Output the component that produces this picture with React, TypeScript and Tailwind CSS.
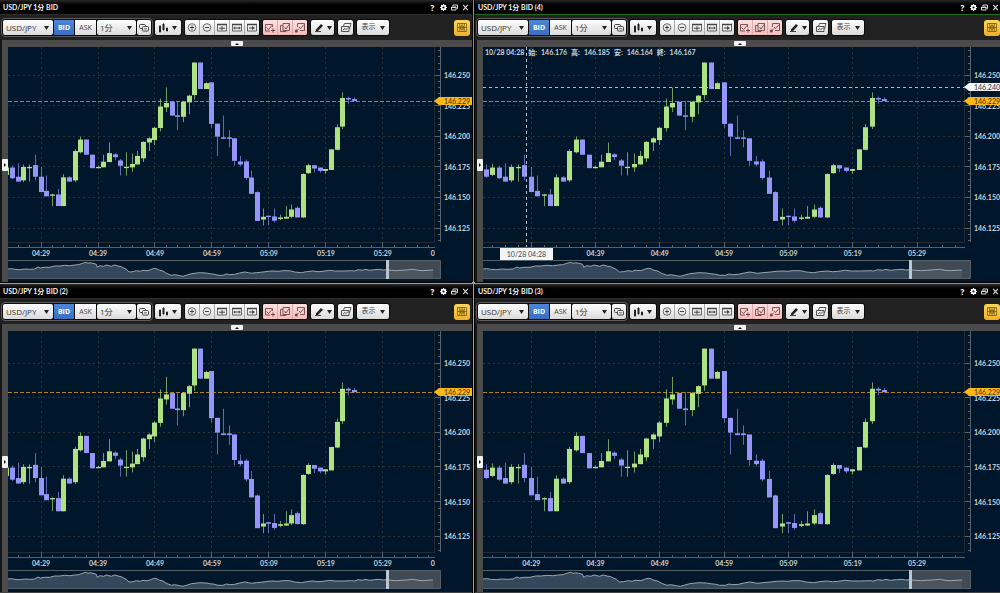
import { useLayoutEffect, useRef, useState } from 'react';
import type { ReactNode } from 'react';

const UP = '#aee283';
const DOWN = '#9696fa';
const PRICE_MAX = 273.1;
const PRICE_SPAN = 159.5;
const MINUTES = 74.95;
const AXIS_W = 37;
const AXIS_H = 40;

// minute offset from 04:29, direction, body top, body bottom, high, low (thousandths above 146)
type Candle = [number, 1 | 0, number, number, number, number];
const candles: Candle[] = [
  [-7, 0, 173, 167, 177, 166],
  [-6, 1, 174.5, 168.5, 177.5, 167.5],
  [-5, 0, 174.5, 165.8, 176, 165],
  [-4, 0, 167, 163, 178, 163],
  [-3, 1, 175, 164, 177, 162.5],
  [-2, 1, 175, 174, 177, 163],
  [-1, 0, 176.5, 167, 185, 164],
  [0, 0, 167, 154.5, 175, 154.5],
  [1, 0, 155.4, 151, 168, 151],
  [2, 1, 152.5, 151.8, 153, 143],
  [3, 0, 152.5, 143, 157, 143],
  [4, 1, 166.5, 143, 169, 143],
  [5, 0, 166.5, 163, 167.5, 163],
  [6, 1, 188, 164, 189.5, 162.5],
  [7, 1, 197.4, 187, 200, 186],
  [8, 0, 197.4, 185, 197.4, 185],
  [9, 0, 185, 174, 185, 174],
  [10, 1, 175, 174.4, 176, 174],
  [11, 1, 179.3, 174.7, 185, 174.7],
  [12, 1, 186.3, 179, 195, 179],
  [13, 0, 185.3, 183, 186.3, 180.5],
  [14, 0, 180.3, 176, 181.5, 168],
  [15, 1, 175.1, 174.5, 187, 168],
  [16, 1, 177.4, 174.7, 186, 171],
  [17, 1, 184, 177, 188, 177],
  [18, 1, 195.5, 182, 196, 179],
  [19, 1, 198.4, 195, 199.3, 188],
  [20, 1, 207, 197, 208, 193],
  [21, 1, 224.4, 206.8, 231, 204],
  [22, 1, 227.3, 223.7, 240, 220],
  [23, 0, 228.3, 217, 228.3, 217],
  [24, 0, 217.2, 216, 229, 205],
  [25, 1, 228.3, 216, 229, 211.6],
  [26, 1, 233.3, 227.8, 234, 218],
  [27, 1, 260.4, 233.8, 260.4, 230],
  [28, 0, 260.4, 238.7, 260.4, 238.7],
  [29, 1, 243.5, 238.7, 244.3, 238.7],
  [30, 0, 244.2, 210.2, 244.2, 207],
  [31, 0, 210.4, 199.8, 210.4, 184],
  [32, 0, 199.2, 198, 217, 198],
  [33, 0, 199.2, 198, 205, 191],
  [34, 0, 198.4, 180, 198.4, 176],
  [35, 0, 179.5, 177, 184, 175.5],
  [36, 0, 179.5, 166, 181, 164.5],
  [37, 0, 166.3, 153, 172, 153],
  [38, 0, 154.4, 130.8, 155, 130.8],
  [39, 1, 134.2, 132, 141, 127.2],
  [40, 0, 135.1, 134, 135.1, 127.2],
  [41, 0, 134.5, 131, 141, 129.6],
  [42, 1, 133.7, 132.5, 136, 131.5],
  [43, 1, 134.2, 132.7, 143, 132.7],
  [44, 1, 140.2, 134.2, 144.3, 133],
  [45, 0, 141.6, 133.7, 142.8, 133.7],
  [46, 1, 169.2, 133.7, 169.7, 133.2],
  [47, 1, 176.4, 169.9, 177.6, 169.4],
  [48, 0, 176.4, 173.7, 176.4, 170.6],
  [49, 0, 174.5, 171.8, 174.5, 170.4],
  [50, 1, 173.3, 171.8, 173.3, 169.4],
  [51, 1, 189.4, 172.5, 189.4, 172.5],
  [52, 1, 207.5, 189, 210, 188.5],
  [53, 1, 231.4, 208, 236, 206],
  [54, 0, 231.4, 230.2, 232.6, 226.6],
  [55, 0, 230.5, 229, 232, 228.6],
];

// overview curve: horizontal position out of 1296, depth out of 57
const overview: [number, number][] = [
  [0, 27], [10, 26], [20, 28], [35, 29], [50, 27], [65, 28], [80, 27], [90, 21], [97, 24], [110, 22],
  [125, 22], [140, 18], [155, 18], [170, 16], [185, 17], [200, 15], [212, 14], [220, 11], [226, 9],
  [233, 7], [240, 10], [246, 8], [255, 10], [265, 13], [268, 22], [275, 17], [287, 19], [295, 15],
  [310, 19], [320, 15], [330, 18], [340, 20], [347, 24], [355, 28], [363, 36], [375, 35], [385, 32],
  [397, 34], [405, 31], [420, 32], [430, 28], [440, 25], [448, 27], [455, 31], [465, 33], [475, 40],
  [490, 46], [500, 44], [515, 47], [525, 49], [535, 46], [550, 41], [575, 38], [595, 39], [605, 41],
  [620, 43], [630, 46], [645, 46], [655, 42], [665, 44], [680, 43], [695, 39], [710, 36], [722, 38],
  [730, 40], [745, 38], [765, 36], [780, 34], [795, 33], [810, 34], [825, 32], [845, 32], [860, 36],
  [880, 38], [895, 35], [915, 33], [930, 35], [945, 34], [965, 31], [980, 33], [1005, 33], [1030, 32],
  [1040, 33], [1050, 29], [1065, 31], [1070, 28], [1085, 31], [1100, 29], [1115, 28], [1125, 30],
  [1135, 29], [1150, 31], [1165, 32], [1180, 31], [1195, 30], [1215, 28], [1230, 31], [1245, 32],
  [1260, 31], [1275, 30],
];

function clock(offset: number) {
  const total = 269 + offset;
  const h = Math.floor(total / 60);
  const m = total % 60;
  return `0${h}:${m < 10 ? '0' : ''}${m}`;
}

function useSize() {
  const ref = useRef<HTMLDivElement>(null);
  const [size, setSize] = useState({ w: 0, h: 0 });
  useLayoutEffect(() => {
    const el = ref.current;
    if (!el) return;
    const read = () => setSize({ w: el.clientWidth, h: el.clientHeight });
    read();
    const observer = new ResizeObserver(read);
    observer.observe(el);
    return () => observer.disconnect();
  }, []);
  return { ref, ...size };
}

interface ChartProps {
  id: string;
  start: number;
  crosshair?: boolean;
}

function PriceTag({ x, y, fill, ink, text }: { x: number; y: number; fill: string; ink: string; text: string }) {
  return (
    <g>
      <path d={`M${x} ${y}l5 -4h33v8h-33z`} fill={fill} />
      <text x={x + 10} y={y + 3} fontSize="7" fontWeight="500" fill={ink}>{text}</text>
    </g>
  );
}

function Chart({ id, start, crosshair }: ChartProps) {
  const { ref, w, h } = useSize();
  const pw = Math.max(w - AXIS_W, 1);
  const ph = Math.max(h - AXIS_H, 1);
  const step = pw / MINUTES;
  const X = (t: number) => (t - start) * step;
  const Y = (p: number) => ((PRICE_MAX - p) / PRICE_SPAN) * ph;
  const line = (v: number) => Math.floor(v) + 0.5;
  const bodyW = Math.round(step) - 1;
  const half = bodyW / 2;

  const prices = [250, 225, 200, 175, 150, 125];
  const minorPrices = Array.from({ length: 32 }, (_, i) => 115 + i * 5);
  const times = [0, 10, 20, 30, 40, 50, 60, 70].filter((t) => X(t) < pw + 8);
  const minorTimes = Array.from({ length: 38 }, (_, i) => -6 + i * 2).filter((t) => X(t) > 0 && X(t) < pw);

  const navTop = ph + 18;
  const navW = pw + 5;
  const points = overview.map(([x, y]) => `${((x / 1296) * navW).toFixed(1)} ${(navTop + y / 3).toFixed(1)}`);
  const curve = `M${points.join('L')}`;
  const curveEnd = (1275 / 1296) * navW;
  const handle = Math.round(navW * 0.875);

  return (
    <div ref={ref} className="relative min-h-0 min-w-0 flex-1 overflow-hidden bg-[#00172b]">
      <svg className="block font-[Lato,sans-serif]" width={w} height={h} role="img" aria-label="USD/JPY 1分 BID">
        <defs>
          <clipPath id={`${id}-plot`}>
            <rect x="0" y="0" width={pw} height={ph + 18} />
          </clipPath>
        </defs>

        <g stroke="#2b3134" strokeDasharray="2 3">
          {prices.map((p) => (
            <line key={p} x1="0" x2={pw} y1={line(Y(p))} y2={line(Y(p))} />
          ))}
          {times.filter((t) => X(t) < pw).map((t) => (
            <line key={t} x1={line(X(t))} x2={line(X(t))} y1="0" y2={ph} />
          ))}
        </g>
        <path d={`M0 ${line(ph)}H${pw - 0.5}V0`} fill="none" stroke="#252a30" />

        <line x1="0" x2={pw} y1={line(Y(228.9))} y2={line(Y(228.9))} stroke="#b08028" strokeDasharray="4 2" />
        <g clipPath={`url(#${id}-plot)`}>
          {candles.map(([t, up, top, bottom, high, low]) => {
            const cx = X(t);
            const color = up ? UP : DOWN;
            return (
              <g key={t}>
                <line x1={line(cx)} x2={line(cx)} y1={Y(high)} y2={Y(low)} stroke={color} strokeOpacity="0.65" />
                <rect
                  x={line(cx) - half}
                  y={Y(top)}
                  width={bodyW}
                  height={Math.max(Y(bottom) - Y(top), 1.3)}
                  fill={color}
                />
              </g>
            );
          })}
          {times.filter((t) => !(crosshair && t === 0)).map((t) => (
            <text key={t} x={X(t)} y={ph + 14} fontSize="7" fontWeight="700" textAnchor="middle" fill="#cdd3d9">
              {clock(t)}
            </text>
          ))}
        </g>

        <g stroke="#59616a">
          <line x1={line(pw + 5)} x2={line(pw + 5)} y1="0" y2={ph} />
          <line x1="0" x2={pw} y1={line(ph + 5)} y2={line(ph + 5)} />
          {prices.map((p) => (
            <line key={p} x1={pw} x2={pw + 5} y1={line(Y(p))} y2={line(Y(p))} />
          ))}
          {minorPrices.map((p) => (
            <line key={p} x1={pw + 3} x2={pw + 5} y1={line(Y(p))} y2={line(Y(p))} />
          ))}
          {times.filter((t) => X(t) < pw).map((t) => (
            <line key={t} x1={line(X(t))} x2={line(X(t))} y1={ph} y2={ph + 5} />
          ))}
          {minorTimes.map((t) => (
            <line key={t} x1={line(X(t))} x2={line(X(t))} y1={ph + 3} y2={ph + 5} />
          ))}
        </g>
        {prices.map((p) => (
          <text key={p} x={pw + 9} y={Y(p) + 3} fontSize="7" fontWeight="700" fill="#cdd3d9">
            {`146.${p}`}
          </text>
        ))}

        <rect x="0" y={navTop} width={navW} height="19" fill="#04182c" />
        <path d={`${curve}V${navTop + 19}H0Z`} fill="#33485a" />
        <rect x={handle} y={navTop} width={navW - handle} height="19" fill="#3f4a54" />
        <rect x={handle} y={navTop + 10} width={curveEnd - handle} height="9" fill="#4c555d" />
        <path d={curve} fill="none" stroke="#9aa7b1" />
        <path d={`M0 ${navTop + 0.5}H${navW + 0.5}V${navTop + 18.5}H0`} fill="none" stroke="#565e66" />
        <rect x={handle} y={navTop} width="3" height="19" fill="#bcc6d0" />

        <PriceTag x={pw - 1} y={Math.round(Y(228.9))} fill="#fdb813" ink="#4a3a10" text="146.229" />
        {crosshair && (
          <g>
            <path
              d={`M0 ${line(Y(240.3))}H${pw}M${line(X(-0.75))} 0V${ph + 5}`}
              fill="none"
              stroke="#b4bcc4"
              strokeDasharray="3 3"
            />
            <PriceTag x={pw - 1} y={Math.round(Y(240.3))} fill="#f4f5f6" ink="#3d4854" text="146.240" />
            <rect x={Math.round(X(-0.75)) - 26} y={ph + 6} width="53" height="12" fill="#f2f4f6" />
            <text x={X(-0.75)} y={ph + 15} fontSize="7" textAnchor="middle" fill="#34485c">10/28 04:28</text>
          </g>
        )}
      </svg>
      {crosshair && (
        <p className="absolute top-0 left-0.5 flex gap-1 font-[Lato,'Noto_Sans_CJK_JP',sans-serif] text-[7px] leading-[11px] font-bold whitespace-nowrap text-[#cdd3d9]">
          <span>10/28 04:28</span>
          <span>始:</span>
          <span>146.176</span>
          <span>高:</span>
          <span>146.185</span>
          <span>安:</span>
          <span>146.164</span>
          <span>終:</span>
          <span>146.167</span>
        </p>
      )}
    </div>
  );
}

function Glyph({ children }: { children: ReactNode }) {
  return (
    <svg viewBox="0 0 12 13" className="h-[13px] w-3 shrink-0" fill="none" stroke="currentColor" aria-hidden="true">
      {children}
    </svg>
  );
}

const Caret = () => (
  <svg viewBox="0 0 5 4" className="h-1 w-[5px] shrink-0" aria-hidden="true">
    <path d="M0 0h5L2.500 4z" fill="#222" />
  </svg>
);

const key = 'flex h-[15px] items-center justify-center bg-linear-to-b from-white to-[#dadada] text-[#444]';
const group = 'flex shrink-0 overflow-hidden rounded-[3px] bg-[#0c0c0c] p-px';

function SelectBox({ label, value, width }: { label: string; value: string; width: string }) {
  return (
    <label className={`relative flex items-center ${width}`}>
      <select
        aria-label={label}
        defaultValue={value}
        className="h-[15px] w-full appearance-none rounded-[2px] bg-linear-to-b from-white to-[#dadada] pl-[3px] text-[8px] leading-[15px] text-[#333]"
      >
        <option>{value}</option>
      </select>
      <span className="pointer-events-none absolute right-1 flex">
        <Caret />
      </span>
    </label>
  );
}

const frame = 'M1.500 3.500h9v6.500h-9z';

const zoomTools: { label: string; icon: ReactNode }[] = [
  { label: '拡大', icon: <Glyph><circle cx="6" cy="6.500" r="3.800" strokeWidth=".8" /><path d="M4 6.500h4M6 4.500v4" /></Glyph> },
  { label: '縮小', icon: <Glyph><circle cx="6" cy="6.500" r="3.800" strokeWidth=".8" /><path d="M4 6.500h4" /></Glyph> },
  { label: '縦横調整', icon: <Glyph><path d={frame} strokeWidth=".8" /><path d="M1 3.500h10" strokeWidth="1.400" /><path d="M3 7.200h6M6 5.200v4" /></Glyph> },
  {
    label: '横幅調整',
    icon: <Glyph><path d={frame} strokeWidth=".8" /><path d="M1 3.500h10" strokeWidth="1.400" /><path d="M3 7h6" /><path d="M2.200 7l2-1.500v3zM9.800 7l-2-1.500v3z" fill="currentColor" stroke="none" /></Glyph>,
  },
  {
    label: '最新へ移動',
    icon: <Glyph><path d={frame} strokeWidth=".8" /><path d="M1 3.500h10" strokeWidth="1.400" /><path d="M3 7h4" /><path d="M6 5l3 2-3 2z" fill="currentColor" stroke="none" /></Glyph>,
  },
];

const orderTools: { label: string; icon: ReactNode }[] = [
  { label: '新規注文', icon: <Glyph><path d="M8.500 6V3.500h-7v6.500H6M2.500 6.500l2 2L8.500 4" strokeWidth=".9" /><path d="M7 9.500h4M9 7.500v4" /></Glyph> },
  { label: '複数注文', icon: <Glyph><path d="M4 4.500H1.500v6H7V9.500M4 2.500h6.500v7H4zM5.500 6l1.500 2 3-4.500" strokeWidth=".9" /></Glyph> },
  {
    label: '決済注文',
    icon: <Glyph><path d="M3.500 6V2.500h7V9.500H6M5 6l1.500 1.500L10 3.500M2.500 10l2.500-2.500" strokeWidth=".9" /><circle cx="2.300" cy="10" r="1.500" fill="currentColor" stroke="none" /></Glyph>,
  },
];

function Toolbar({ index }: { index: number }) {
  return (
    <div className="flex h-[25px] items-center gap-0.5 bg-[#212121] px-0.5">
      <div className={`${group} gap-px outline outline-[#5c5c5c]`}>
        <SelectBox label={`通貨ペア ${index}`} value="USD/JPY" width="w-[50px]" />
        <button className="h-[15px] w-5 bg-linear-to-b from-[#4e86d6] to-[#3a6fc0] text-[7px] leading-[15px] font-bold text-white">BID</button>
        <button className={`${key} w-[21px] text-[7px] leading-[15px] font-medium`}>ASK</button>
        <SelectBox label={`足種 ${index}`} value="1分" width="w-[39px]" />
        <button aria-label="連動" className={`${key} w-3.5 rounded-[2px]`}>
          <Glyph>
            <rect x="1.500" y="3.500" width="6" height="4" rx="1" />
            <rect x="4.500" y="5.500" width="6" height="4.500" rx="1" fill="#eee" />
            <path d="M6 7.800h3" strokeWidth=".8" />
          </Glyph>
        </button>
      </div>
      <div className={group}>
        <button aria-label="チャート種類" className={`${key} w-[26px] gap-1 rounded-[2px]`}>
          <svg viewBox="0 0 9 11" className="h-[11px] w-[9px]" fill="#222" aria-hidden="true">
            <path d="M0 4h2v6H0zM3.500 2h2v6h-2zM7 6h2v3H7zM.7 3h.6v8H.7zM4.200 1h.6v8h-.6zM7.700 5h.6v5h-.6z" />
          </svg>
          <Caret />
        </button>
      </div>
      <div className={group}>
        <div className="flex gap-px overflow-hidden rounded-[2px] bg-[#aaa]">
          {zoomTools.map((t) => (
            <button key={t.label} aria-label={t.label} className={`${key} w-3.5`}>{t.icon}</button>
          ))}
        </div>
      </div>
      <div className={group}>
        <div className="flex gap-px overflow-hidden rounded-[2px] bg-[#deabab]">
          {orderTools.map((t) => (
            <button
              key={t.label}
              aria-label={t.label}
              className="flex h-[15px] w-3.5 items-center justify-center bg-linear-to-b from-[#fde0e0] to-[#f4bcbc] text-[#6b4a4a]"
            >
              {t.icon}
            </button>
          ))}
        </div>
      </div>
      <div className={group}>
        <button aria-label="描画" className={`${key} w-[23px] gap-0.5 rounded-[2px]`}>
          <Glyph>
            <path d="M3 8.500L8 3l2 1.800L5 10H3z" fill="#222" stroke="none" />
            <path d="M2 10.500h6" stroke="#444" />
          </Glyph>
          <Caret />
        </button>
      </div>
      <div className={group}>
        <button aria-label="複製" className={`${key} w-[15px] rounded-[2px]`}>
          <Glyph>
            <path d="M3.500 5L4.500 2.500h6.500L9.500 8M1.500 5.500h7.500v5h-7.500zM3 9l2-1.500 1 1L8 6.500" strokeWidth=".9" />
          </Glyph>
        </button>
      </div>
      <div className={group}>
        <button className={`${key} w-8 gap-1 rounded-[2px] text-[7px]`}>
          表示
          <Caret />
        </button>
      </div>
      <button
        aria-label="レイアウト"
        className="ml-auto flex size-4 shrink-0 items-center justify-center rounded-[3px] bg-linear-to-b from-[#fbd75c] to-[#efb028] text-[#7a5c14]"
      >
        <Glyph>
          <path d="M1.500 2.500h9v8h-9zM1 6.500h10M6 2v9M3.700 2.500v8M8.300 2.500v8M4.500 5h3v3h-3z" strokeWidth=".8" />
        </Glyph>
      </button>
    </div>
  );
}

function WindowButtons() {
  return (
    <div className="flex items-center gap-1 text-white">
      <button aria-label="ヘルプ" className="w-[7px] text-[8px] leading-[10px] font-bold">?</button>
      <button aria-label="設定" className="size-[7px]">
        <svg viewBox="0 0 12 12" className="size-[7px]" aria-hidden="true">
          <circle cx="6" cy="6" r="3.300" fill="none" stroke="#fff" strokeWidth="2.600" />
          <path d="M6 0v12M0 6h12M1.800 1.800l8.400 8.400M10.200 1.800l-8.400 8.400" stroke="#fff" strokeWidth="2" />
          <circle cx="6" cy="6" r="1.900" fill="#111" />
        </svg>
      </button>
      <button aria-label="元に戻す" className="size-[7px]">
        <svg viewBox="0 0 14 14" className="size-[7px]" fill="none" stroke="#dcdcdc" strokeWidth="2" aria-hidden="true">
          <path d="M4 4V2h9v7h-2" />
          <path d="M1 6h9v6H1zM1 7h9" />
        </svg>
      </button>
      <button aria-label="閉じる" className="size-[7px]">
        <svg viewBox="0 0 12 12" className="size-[7px]" fill="none" stroke="#e4e4e4" strokeWidth="1.800" aria-hidden="true">
          <path d="M2 1.500l8 9M10 1.500l-8 9" />
        </svg>
      </button>
    </div>
  );
}

interface PanelProps {
  index: number;
  title: string;
  start: number;
  active?: boolean;
  className?: string;
}

function Panel({ index, title, start, active, className = '' }: PanelProps) {
  return (
    <section className={`flex min-h-0 min-w-0 flex-col bg-[#161616] ${className}`}>
      <header
        className={`flex h-[15px] shrink-0 items-end justify-between border-b bg-linear-to-b from-[#2a2a2a] via-black to-black pr-[3px] pl-[3px] ${active ? 'border-[#1f6a1f]' : 'border-[#2c2c2c]'}`}
      >
        <h2 className="font-[Lato,'Noto_Sans_CJK_JP',sans-serif] text-[7px] leading-[13px] font-bold text-[#f4f4f4]">{title}</h2>
        <div className="flex h-[13px] items-center">
          <WindowButtons />
        </div>
      </header>
      <Toolbar index={index} />
      <div className="ml-0.5 flex h-[7px] shrink-0 items-center justify-center bg-[#4b4b4b]">
        <button aria-label="上部を隠す" className="flex h-[5px] w-3 items-center justify-center rounded-[1px] bg-[#f2f2f2]">
          <svg viewBox="0 0 4 2" className="h-0.5 w-1" aria-hidden="true"><path d="M0 2l2-2 2 2z" fill="#111" /></svg>
        </button>
      </div>
      <div className="ml-0.5 flex min-h-0 flex-1">
        <div className="flex w-1.5 shrink-0 items-center bg-[#4b4b4b]">
          <button aria-label="左側を開く" className="flex h-3 w-1.5 items-center justify-center rounded-[1px] bg-[#f2f2f2]">
            <svg viewBox="0 0 2 4" className="h-1 w-0.5" aria-hidden="true"><path d="M0 0l2 2-2 2z" fill="#111" /></svg>
          </button>
        </div>
        <Chart id={`chart-${index}`} start={start} crosshair={active} />
      </div>
    </section>
  );
}

export default function App() {
  return (
    <main className="grid h-screen grid-cols-[minmax(0,472fr)_3px_minmax(0,525fr)] grid-rows-[minmax(0,282fr)_2px_minmax(0,309fr)] overflow-hidden bg-black font-['Open_Sans','Noto_Sans_CJK_JP',sans-serif]">
      <Panel index={1} title="USD/JPY 1分 BID" start={-5.8} />
      <div className="border-x border-black bg-[#5fae62]" />
      <Panel index={4} title="USD/JPY 1分 BID (4)" start={-7.5} active className="-mr-0.5" />
      <div className="border-t border-black bg-[#a3a3a0]" />
      <div className="bg-[#8fa88f]" />
      <div className="border-t border-black bg-[#7f9f80]" />
      <Panel index={2} title="USD/JPY 1分 BID (2)" start={-5.8} className="border-b border-[#444]" />
      <div className="border-x border-black bg-[#a3a3a0]" />
      <Panel index={3} title="USD/JPY 1分 BID (3)" start={-7.5} className="-mr-0.5 border-b border-[#444]" />
    </main>
  );
}
